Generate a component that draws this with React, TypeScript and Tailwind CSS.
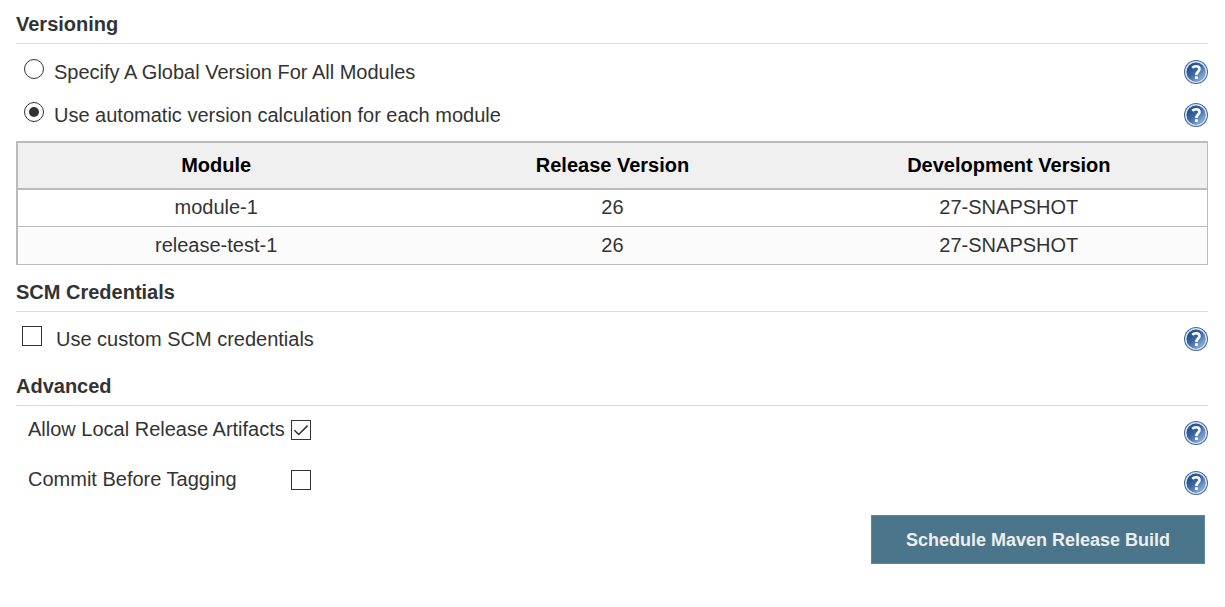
import type { InputHTMLAttributes, ReactNode } from 'react';

const modules = [
  { name: 'module-1', release: '26', development: '27-SNAPSHOT' },
  { name: 'release-test-1', release: '26', development: '27-SNAPSHOT' },
];

function SectionHeading({ children }: { children: ReactNode }) {
  return <h2 className="border-b border-[#dddddd] pb-[5px] text-[20px] leading-7 font-bold">{children}</h2>;
}

function HelpButton({ topic }: { topic: string }) {
  return (
    <button type="button" aria-label={`Help: ${topic}`} className="ml-auto shrink-0 cursor-pointer">
      <svg viewBox="0 0 24 24" className="block size-6" aria-hidden="true">
        <defs>
          <linearGradient id="help-disc" x1="0.1" y1="0.1" x2="0.85" y2="0.9">
            <stop offset="0" stopColor="#1f4a8a" />
            <stop offset="0.45" stopColor="#3a649f" />
            <stop offset="1" stopColor="#8fb2dc" />
          </linearGradient>
        </defs>
        <circle cx="12" cy="12" r="12" fill="#456a9f" />
        <circle cx="12" cy="12" r="10.2" fill="none" stroke="#d3deee" strokeWidth="1.6" />
        <circle cx="12" cy="12" r="9.3" fill="url(#help-disc)" />
        <path
          d="M8.3 7.9C9.3 6.7 10.6 6.2 12.1 6.2C14.3 6.2 15.5 7.3 15.5 9C15.5 11.6 12.4 11.5 12.4 15"
          fill="none"
          stroke="#ffffff"
          strokeWidth="2.6"
        />
        <rect x="11" y="16.2" width="2.9" height="2.8" rx="0.6" fill="#ffffff" />
      </svg>
    </button>
  );
}

function Radio(props: InputHTMLAttributes<HTMLInputElement>) {
  return (
    <span className="mb-[6px] grid size-5 shrink-0">
      <input
        type="radio"
        {...props}
        className="peer col-start-1 row-start-1 size-5 appearance-none rounded-full border border-[#333333] bg-white"
      />
      <span className="pointer-events-none col-start-1 row-start-1 hidden size-[10px] place-self-center rounded-full bg-[#333333] peer-checked:block" />
    </span>
  );
}

function Checkbox(props: InputHTMLAttributes<HTMLInputElement>) {
  return (
    <span className="grid size-5 shrink-0">
      <input
        type="checkbox"
        {...props}
        className="peer col-start-1 row-start-1 size-5 appearance-none border border-[#333333] bg-white"
      />
      <svg
        viewBox="0 0 20 20"
        className="pointer-events-none col-start-1 row-start-1 hidden size-5 peer-checked:block"
        aria-hidden="true"
      >
        <path d="M3.4 10.2L7.7 14.5L16.6 5.6" fill="none" stroke="#333333" strokeWidth="1.5" />
      </svg>
    </span>
  );
}

function AdvancedOption({ id, label, checked }: { id: string; label: string; checked?: boolean }) {
  return (
    <div className="flex h-[50px] items-center pl-3">
      <label htmlFor={id} className="w-[263px] pb-1">
        {label}
      </label>
      <div className="pb-[2px]">
        <Checkbox id={id} defaultChecked={checked} />
      </div>
      <div className="ml-auto flex pt-1">
        <HelpButton topic={label} />
      </div>
    </div>
  );
}

export default function App() {
  return (
    <form
      className="px-4 pt-[10px] pb-10 font-['Liberation_Sans',Arial,sans-serif] text-[20px] leading-7 text-[#333333]"
      onSubmit={(event) => event.preventDefault()}
    >
      <div className="mr-px">
        <SectionHeading>Versioning</SectionHeading>
        <div className="mt-[6px] flex h-[43px] items-center pl-2">
          <Radio id="global-version" name="versioning" />
          <label htmlFor="global-version" className="pl-[10px]">
            Specify A Global Version For All Modules
          </label>
          <HelpButton topic="global version" />
        </div>
        <div className="flex h-[43px] items-center pl-2">
          <Radio id="automatic-version" name="versioning" defaultChecked />
          <label htmlFor="automatic-version" className="pl-[10px]">
            Use automatic version calculation for each module
          </label>
          <HelpButton topic="automatic version" />
        </div>

        <table className="mt-[5px] w-full table-fixed border-separate border-spacing-0 border-t-2 border-r border-b border-l-2 border-[#bbbbbb] text-center">
          <thead>
            <tr className="h-[47px] bg-[#f0f0f0] text-black">
              <th className="border-b-2 border-[#bbbbbb] p-0 pb-[2px]">Module</th>
              <th className="border-b-2 border-[#bbbbbb] p-0 pb-[2px]">Release Version</th>
              <th className="border-b-2 border-[#bbbbbb] p-0 pb-[2px]">Development Version</th>
            </tr>
          </thead>
          <tbody>
            {modules.map((module) => (
              <tr key={module.name} className="group h-[37px] even:bg-[#fbfbfb]">
                <td className="border-b border-[#bbbbbb] p-0 pb-[2px] group-last:border-b-0">{module.name}</td>
                <td className="border-b border-[#bbbbbb] p-0 pb-[2px] group-last:border-b-0">{module.release}</td>
                <td className="border-b border-[#bbbbbb] p-0 pb-[2px] group-last:border-b-0">{module.development}</td>
              </tr>
            ))}
          </tbody>
        </table>

        <div className="mt-[13px]">
          <SectionHeading>SCM Credentials</SectionHeading>
        </div>
        <div className="mt-[5px] flex h-[43px] items-center pl-[6px]">
          <div className="mb-[6px]">
            <Checkbox id="custom-scm" />
          </div>
          <label htmlFor="custom-scm" className="pl-[14px]">
            Use custom SCM credentials
          </label>
          <HelpButton topic="SCM credentials" />
        </div>

        <div className="mt-3">
          <SectionHeading>Advanced</SectionHeading>
        </div>
        <AdvancedOption id="local-artifacts" label="Allow Local Release Artifacts" checked />
        <AdvancedOption id="commit-before" label="Commit Before Tagging" />

        <div className="mt-[9px] flex justify-end pr-[3px]">
          <button
            type="submit"
            className="h-[49px] cursor-pointer border border-[#5788a1] bg-[#4b758b] px-[34px] text-[18px] font-bold text-[#eeeeee]"
          >
            Schedule Maven Release Build
          </button>
        </div>
      </div>
    </form>
  );
}
